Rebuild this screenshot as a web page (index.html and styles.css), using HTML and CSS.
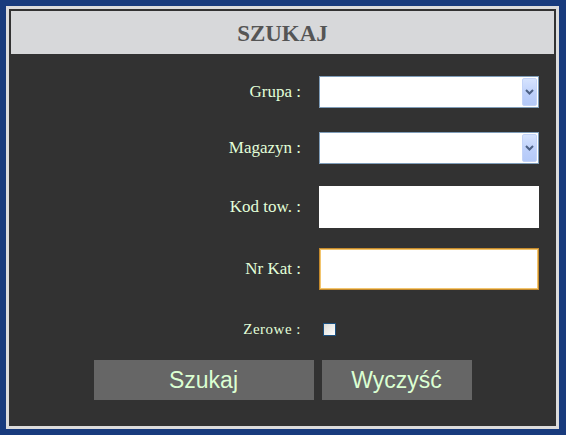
FILE: index.html
```html
<!DOCTYPE html>
<html lang="pl">
<head>
  <meta charset="UTF-8" />
  <title>Szukaj</title>
  <link rel="stylesheet" href="styles.css">
</head>
<body>
  <div class="frame">
    <div class="panel">
      <header class="title">SZUKAJ</header>
      <form class="search-form">
        <div class="row row-select">
          <label for="grupa">Grupa :</label>
          <div class="combo">
            <select id="grupa"><option></option></select>
            <span class="drop">
              <svg width="9" height="6" viewBox="0 0 9 6"><path d="M1 1 L4.5 4.5 L8 1" fill="none" stroke="#4d6185" stroke-width="2"/></svg>
            </span>
          </div>
        </div>
        <div class="row row-select row-mag">
          <label for="magazyn">Magazyn :</label>
          <div class="combo">
            <select id="magazyn"><option></option></select>
            <span class="drop">
              <svg width="9" height="6" viewBox="0 0 9 6"><path d="M1 1 L4.5 4.5 L8 1" fill="none" stroke="#4d6185" stroke-width="2"/></svg>
            </span>
          </div>
        </div>
        <div class="row row-text row-kod">
          <label for="kod">Kod tow. :</label>
          <input type="text" id="kod" />
        </div>
        <div class="row row-text">
          <label for="nrkat">Nr Kat :</label>
          <input type="text" id="nrkat" class="focused" />
        </div>
        <div class="row row-check">
          <label for="zerowe">Zerowe :</label>
          <div><input type="checkbox" id="zerowe" /></div>
        </div>
        <div class="buttons">
          <button type="button" class="btn btn-search">Szukaj</button>
          <button type="button" class="btn btn-clear">Wyczyść</button>
        </div>
      </form>
    </div>
  </div>
</body>
</html>
```

FILE: styles.css
```css
* {
  margin: 0;
  padding: 0;
  box-sizing: border-box;
}

body {
  background: #183b7d;
  font-family: 'Liberation Serif', 'Times New Roman', serif;
  width: 566px;
  height: 435px;
  padding: 6px 0 0 6px;
}

.frame {
  width: 553px;
  height: 423px;
  border: 3px solid #dcdcdc;
  background: #323232;
  padding: 2px;
}

.panel {
  height: 100%;
  display: flex;
  flex-direction: column;
}

.title {
  height: 43px;
  background: #d7d8da;
  color: #555;
  font-weight: bold;
  font-size: 23px;
  display: flex;
  align-items: center;
  justify-content: center;
  padding-top: 2px;
}

.search-form {
  padding-top: 22px;
  display: flex;
  flex-direction: column;
}

.row {
  display: grid;
  grid-template-columns: 1fr 220px;
  column-gap: 18px;
  padding-right: 15px;
  align-items: center;
  color: #e2ffd9;
  font-size: 17px;
}

.row label {
  text-align: right;
}

.row-select {
  height: 32px;
  margin-bottom: 24px;
}

.row-mag {
  margin-bottom: 22px;
}

.row-text {
  height: 42px;
  margin-bottom: 20px;
}

.row-kod {
  margin-bottom: 20px;
}

.combo {
  position: relative;
  height: 32px;
}

.combo select {
  appearance: none;
  -webkit-appearance: none;
  width: 100%;
  height: 100%;
  border: 1px solid #7f9db9;
  background: #fff;
  border-radius: 0;
}

.drop {
  position: absolute;
  top: 2px;
  right: 2px;
  width: 15px;
  height: 28px;
  border: 1px solid #c3d3f7;
  border-radius: 2px;
  background: linear-gradient(180deg, #d6e3fe 0%, #bccffa 60%, #b4c9f8 100%);
  display: flex;
  align-items: center;
  justify-content: center;
}

.drop svg {
  display: block;
}

.row-text input {
  width: 100%;
  height: 100%;
  border: none;
  background: #fff;
  outline: none;
}

.row-text input.focused {
  border: 1px solid #c58a2c;
  box-shadow: inset 0 0 0 1px #f2c56e;
}

.row-check {
  height: 14px;
  margin-top: 11px;
  font-size: 15px;
  letter-spacing: 0.5px;
}

.row-check input {
  appearance: none;
  -webkit-appearance: none;
  display: block;
  width: 13px;
  height: 13px;
  margin-left: 4px;
  border: 1px solid #1c5180;
  background: linear-gradient(135deg, #dcdcd7 0%, #f4f4f2 70%, #fff 100%);
}

.buttons {
  display: flex;
  justify-content: center;
  gap: 8px;
  margin-top: 25px;
}

.btn {
  height: 40px;
  border: none;
  background: #666;
  color: #dbffd2;
  font-family: 'Liberation Sans', Arial, sans-serif;
  font-size: 23px;
  cursor: pointer;
}

.btn-search {
  width: 220px;
}

.btn-clear {
  width: 150px;
}
```
